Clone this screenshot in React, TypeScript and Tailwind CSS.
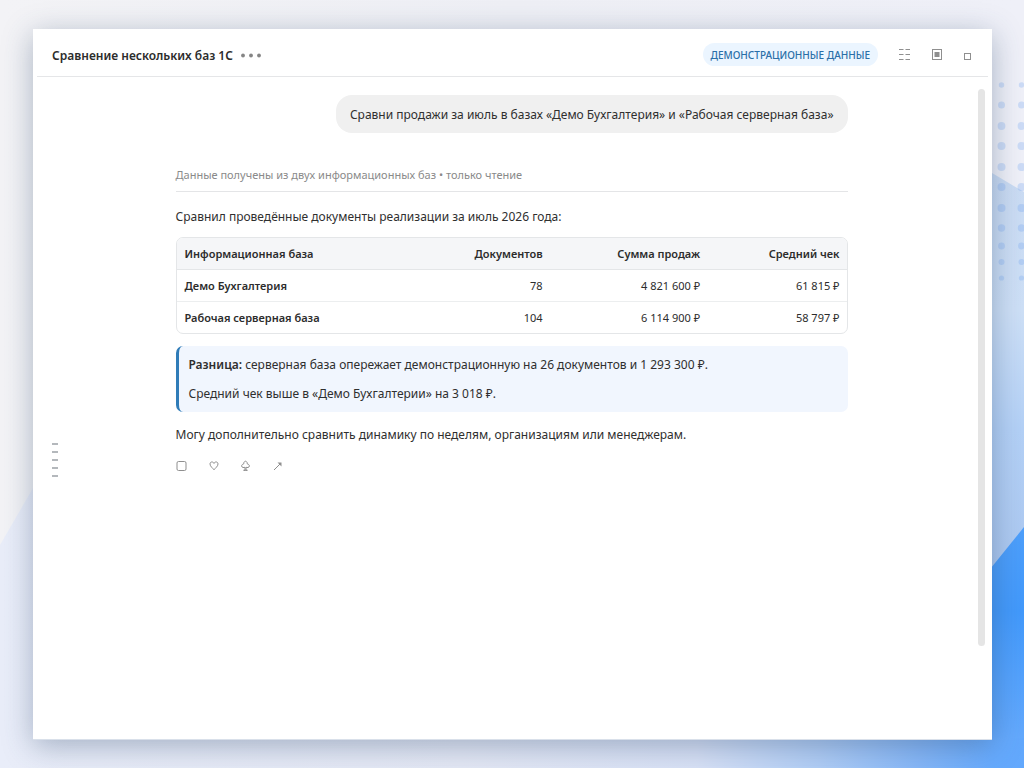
import React from "react";

const rows = [
  { name: "Демо Бухгалтерия", docs: "78", sum: "4 821 600 ₽", avg: "61 815 ₽" },
  { name: "Рабочая серверная база", docs: "104", sum: "6 114 900 ₽", avg: "58 797 ₽" },
];

const dotRows = [
  { y: 85, r: 2.7 },
  { y: 105, r: 3.5 },
  { y: 126, r: 3.9 },
  { y: 146, r: 4 },
  { y: 167, r: 4 },
  { y: 187, r: 4 },
  { y: 208, r: 4 },
  { y: 228, r: 3.7 },
  { y: 246, r: 3.4 },
  { y: 262, r: 3 },
  { y: 278, r: 2.6 },
];

function Backdrop() {
  return (
    <svg
      className="absolute inset-0 h-full w-full"
      viewBox="0 0 1024 768"
      preserveAspectRatio="none"
      aria-hidden="true"
    >
      <defs>
        <linearGradient id="base" x1="0" y1="0" x2="1" y2="0">
          <stop offset="0" stopColor="#f3f3f6" />
          <stop offset="0.5" stopColor="#eeeff5" />
          <stop offset="1" stopColor="#eff0f8" />
        </linearGradient>
        <linearGradient id="low" x1="0" y1="0" x2="1" y2="0">
          <stop offset="0" stopColor="#e9edf9" />
          <stop offset="0.45" stopColor="#e4e8f5" />
          <stop offset="0.68" stopColor="#d8e1f6" />
          <stop offset="0.8" stopColor="#b0cdf6" />
          <stop offset="0.9" stopColor="#84b6f8" />
          <stop offset="0.97" stopColor="#66aafd" />
          <stop offset="1" stopColor="#62a8fd" />
        </linearGradient>
        <linearGradient id="pale" x1="0" y1="173" x2="0" y2="567" gradientUnits="userSpaceOnUse">
          <stop offset="0" stopColor="#cadbf3" />
          <stop offset="0.35" stopColor="#cddff6" />
          <stop offset="0.65" stopColor="#b3d0f6" />
          <stop offset="1" stopColor="#acc8f0" />
        </linearGradient>
        <linearGradient id="deep" x1="0" y1="527" x2="0" y2="738" gradientUnits="userSpaceOnUse">
          <stop offset="0" stopColor="#4e9ffb" />
          <stop offset="0.4" stopColor="#4299fb" />
          <stop offset="1" stopColor="#64a9fd" />
        </linearGradient>
      </defs>
      <rect width="1024" height="768" fill="url(#base)" />
      <path d="M0 545 L33 488 L500 300 L980 700 V768 H0 Z" fill="url(#low)" />
      <path d="M900 118 L1024 192 V560 L980 590 H900 Z" fill="url(#pale)" />
      <path d="M1024 527 L970 594 V768 H1024 Z" fill="url(#deep)" />
      <path d="M0 738 H1024 V768 H0 Z" fill="url(#low)" />
      <g fill="#6fa4f0" fillOpacity="0.27">
        {dotRows.map((d) => (
          <React.Fragment key={d.y}>
            <circle cx="1001.5" cy={d.y} r={d.r} />
            <circle cx="1021.5" cy={d.y} r={d.r} />
          </React.Fragment>
        ))}
      </g>
    </svg>
  );
}

const iconButton = "flex items-center justify-center text-[#8f8f8f]";

function Header() {
  return (
    <header className="mx-1 flex h-12 items-center border-b border-[#e5e6e8] pl-[15px] pr-4 pt-1">
      <h1 className="pt-0.5 text-[12px] font-semibold text-[#2c2c2c]">Сравнение нескольких баз 1С</h1>
      <button type="button" aria-label="Меню" className="ml-2 flex gap-1 text-[#858585]">
        <svg width="20" height="6" viewBox="0 0 20 6" fill="currentColor">
          <circle cx="2" cy="3.5" r="1.9" />
          <circle cx="10" cy="3.5" r="1.9" />
          <circle cx="18" cy="3.5" r="1.9" />
        </svg>
      </button>
      <span className="ml-auto flex h-[23px] items-center rounded-full bg-[#ebf5ff] px-2 text-[10px] font-medium text-[#2a6fa8]">
        ДЕМОНСТРАЦИОННЫЕ ДАННЫЕ
      </span>
      <div className="ml-5 flex items-center gap-5">
        <button type="button" aria-label="Список" className={iconButton}>
          <svg width="13" height="12" viewBox="0 0 13 12" fill="none" stroke="currentColor">
            <path d="M1 0.5h4.5M7.5 0.5h4.5M1 5.5h4.5M7.5 5.5h4.5M1 10.5h4.5M7.5 10.5h4.5" />
          </svg>
        </button>
        <button type="button" aria-label="Панель" className={iconButton}>
          <svg width="12" height="12" viewBox="0 0 12 12" fill="none" stroke="currentColor">
            <rect x="1.5" y="0.5" width="9" height="10" />
            <rect x="3.5" y="3" width="5" height="5" fill="currentColor" stroke="none" />
          </svg>
        </button>
        <button type="button" aria-label="Развернуть" className={iconButton}>
          <svg width="9" height="12" viewBox="0 0 9 12" fill="none" stroke="currentColor">
            <rect x="1.5" y="4.5" width="6" height="6" />
          </svg>
        </button>
      </div>
    </header>
  );
}

function SalesTable() {
  const num = "px-[7px] pt-0.5 text-right font-normal";
  return (
    <div className="mt-2.5 overflow-hidden rounded-[7px] border border-[#e4e6e8]">
      <table className="w-full table-fixed border-collapse text-[11px] leading-4 text-[#2c2c2c]">
        <thead>
          <tr className="h-[31px] border-b border-[#e4e6e8] bg-[#f5f6f8]">
            <th className="w-[36%] px-2 pt-0.5 text-left font-semibold">Информационная база</th>
            <th className="w-[19.7%] px-[7px] pt-0.5 text-right font-semibold">Документов</th>
            <th className="w-[23.5%] px-[7px] pt-0.5 text-right font-semibold">Сумма продаж</th>
            <th className="px-[7px] pt-0.5 text-right font-semibold">Средний чек</th>
          </tr>
        </thead>
        <tbody>
          {rows.map((r) => (
            <tr key={r.name} className="h-8 border-b border-[#eceeef] last:border-b-0">
              <th scope="row" className="px-2 pt-0.5 text-left font-semibold">{r.name}</th>
              <td className={num}>{r.docs}</td>
              <td className={num}>{r.sum}</td>
              <td className={num}>{r.avg}</td>
            </tr>
          ))}
        </tbody>
      </table>
    </div>
  );
}

function Actions() {
  return (
    <div className="mt-[15px] flex items-center gap-5 text-[#8f8f8f]">
      <button type="button" aria-label="Копировать">
        <svg width="12" height="12" viewBox="0 0 12 12" fill="none" stroke="currentColor">
          <rect x="1" y="1.5" width="9" height="9" rx="1.5" />
        </svg>
      </button>
      <button type="button" aria-label="Нравится">
        <svg width="12" height="12" viewBox="0 0 12 12" fill="none" stroke="currentColor">
          <path d="M6 9.8 C5 8.3 2 6.4 2 4 C2 1.6 5 1.2 6 3.4 C7 1.2 10 1.6 10 4 C10 6.4 7 8.3 6 9.8Z" />
        </svg>
      </button>
      <button type="button" aria-label="Не нравится">
        <svg width="12" height="12" viewBox="0 0 12 12" fill="none" stroke="currentColor">
          <path d="M5.5 1.2C4.2 1.4 3.6 2.6 3.8 3.8C2.4 4.2 1.6 5 1.6 6C1.6 7.6 4 7.9 5 7.2V10.3H3.6H7.4H6V7.2C7 7.9 9.4 7.6 9.4 6C9.4 5 8.6 4.2 7.2 3.8C7.4 2.6 6.8 1.4 5.5 1.2Z" />
        </svg>
      </button>
      <button type="button" aria-label="Поделиться">
        <svg width="12" height="12" viewBox="0 0 12 12" fill="none" stroke="currentColor">
          <path d="M2 10L8.5 3.5" />
          <path d="M5.5 2.5H9.5V6.5Z" fill="currentColor" stroke="none" />
        </svg>
      </button>
    </div>
  );
}

export default function App() {
  return (
    <div className="relative flex min-h-screen flex-col overflow-hidden pb-7 pl-[33px] pr-8 pt-[29px] font-['Noto_Sans','Open_Sans',sans-serif] text-[12px] leading-5 text-[#2f2f2f]">
      <Backdrop />
      <div className="relative flex grow flex-col border-b border-[#d9e0ea] bg-white shadow-[0_6px_28px_rgba(50,75,110,0.38)]">
        <Header />
        <div className="flex grow">
          <nav aria-label="Сообщения" className="flex w-[78px] shrink-0 flex-col justify-center gap-[6px] pl-[19px] pt-[104px]">
            {[0, 1, 2, 3, 4].map((i) => (
              <span key={i} className="h-0.5 w-1.5 bg-[#b4b8bc]" />
            ))}
          </nav>
          <main className="flex grow flex-col items-center pt-[18px]">
            <div className="flex w-full max-w-[672px] flex-col">
              <p className="self-end rounded-[16px] bg-[#f0f0f0] px-3.5 pb-2 pt-2.5">
                Сравни продажи за июль в базах «Демо Бухгалтерия» и «Рабочая серверная база»
              </p>
              <p className="mt-8 border-b border-[#e4e5e7] pb-1.5 text-[11px] text-[#8a8a8a]">
                Данные получены из двух информационных баз • только чтение
              </p>
              <p className="mt-[15px]">Сравнил проведённые документы реализации за июль 2026 года:</p>
              <SalesTable />
              <div className="mt-3 flex flex-col gap-[9px] rounded-[7px] border-l-[3px] border-[#2f7cb8] bg-[#f1f6fe] pb-2 pl-2.5 pr-3 pt-[9px]">
                <p>
                  <strong className="font-semibold">Разница:</strong> серверная база опережает демонстрационную на 26
                  документов и 1 293 300 ₽.
                </p>
                <p>Средний чек выше в «Демо Бухгалтерии» на 3 018 ₽.</p>
              </div>
              <p className="mt-[13px]">Могу дополнительно сравнить динамику по неделям, организациям или менеджерам.</p>
              <Actions />
            </div>
          </main>
          <div className="flex w-20 shrink-0 justify-end pb-[93px] pr-[7px] pt-3">
            <div className="w-[7px] rounded-full bg-[#e5e5e5]" />
          </div>
        </div>
      </div>
    </div>
  );
}
